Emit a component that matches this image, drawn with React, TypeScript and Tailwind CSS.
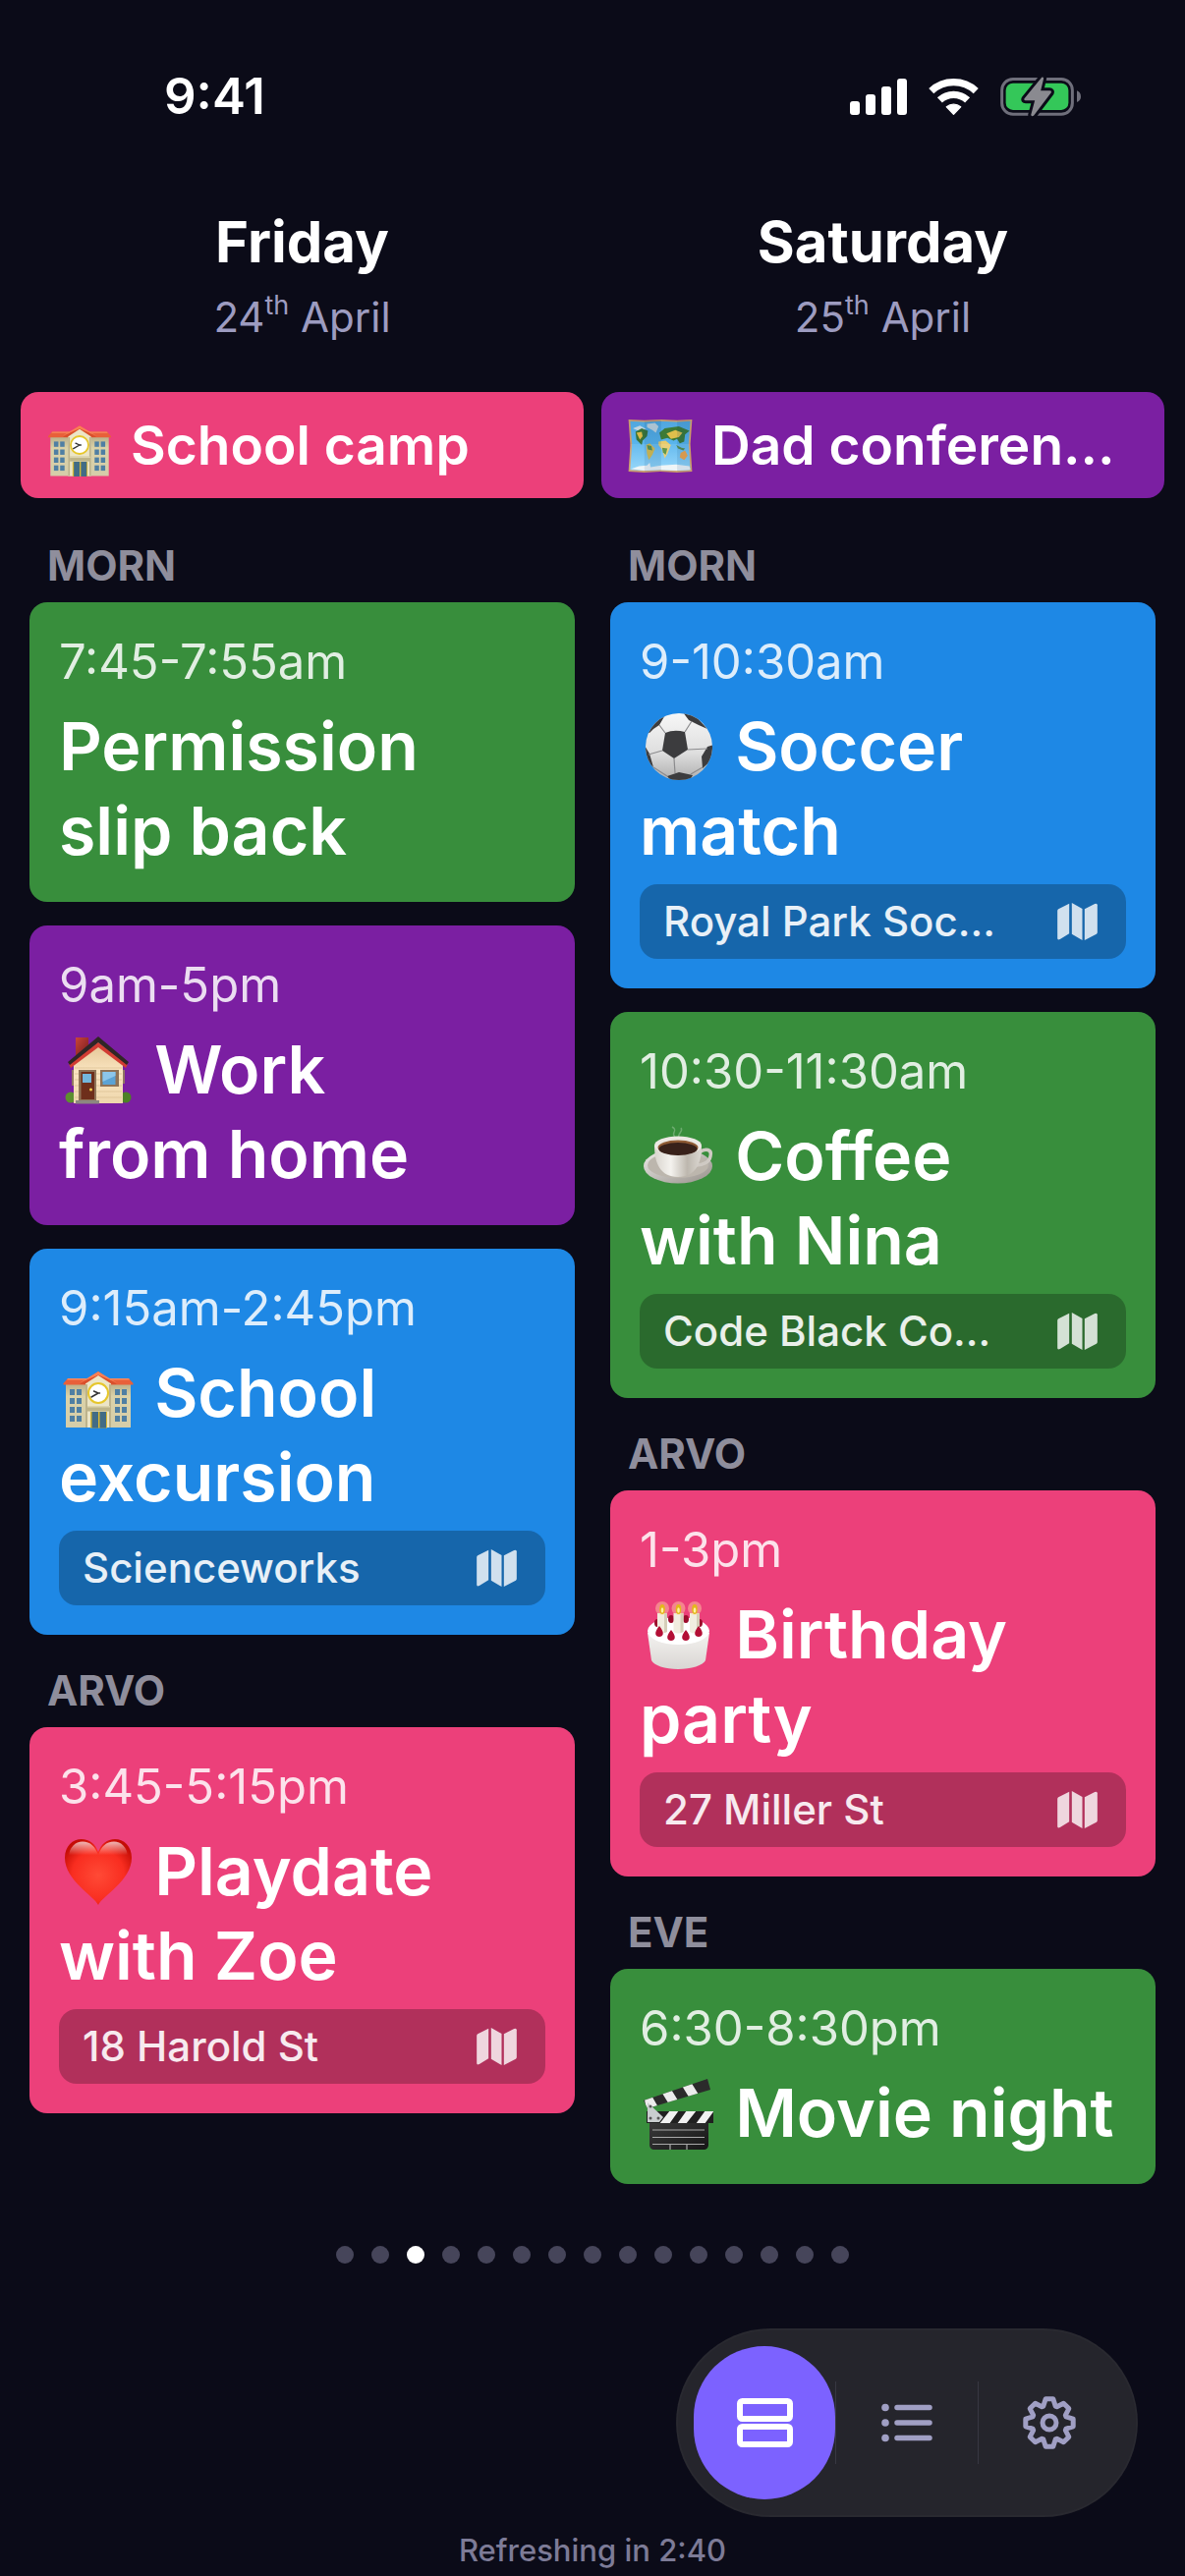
import type { ReactNode } from "react";
import clsx from "clsx";

type EmojiName = "school" | "map" | "house" | "heart" | "soccer" | "coffee" | "cake" | "clapper";
type Color = "green" | "purple" | "blue" | "pink";

type CalendarEvent = { time: string; title: string; color: Color; emoji?: EmojiName; location?: string };
type Section = { label: string; events: CalendarEvent[] };
type Day = {
  name: string;
  date: string;
  month: string;
  allDay: { title: string; color: Color; emoji: EmojiName };
  sections: Section[];
};

const COLORS: Record<Color, string> = {
  green: "bg-[#388e3c]",
  purple: "bg-[#7b1fa2]",
  blue: "bg-[#1e88e5]",
  pink: "bg-[#ec407a]",
};

const DAYS: Day[] = [
  {
    name: "Friday",
    date: "24",
    month: "April",
    allDay: { title: "School camp", color: "pink", emoji: "school" },
    sections: [
      {
        label: "MORN",
        events: [
          { time: "7:45-7:55am", title: "Permission\nslip back", color: "green" },
          { time: "9am-5pm", title: "Work\nfrom home", color: "purple", emoji: "house" },
          { time: "9:15am-2:45pm", title: "School\nexcursion", color: "blue", emoji: "school", location: "Scienceworks" },
        ],
      },
      {
        label: "ARVO",
        events: [
          { time: "3:45-5:15pm", title: "Playdate\nwith Zoe", color: "pink", emoji: "heart", location: "18 Harold St" },
        ],
      },
    ],
  },
  {
    name: "Saturday",
    date: "25",
    month: "April",
    allDay: { title: "Dad conferen…", color: "purple", emoji: "map" },
    sections: [
      {
        label: "MORN",
        events: [
          { time: "9-10:30am", title: "Soccer\nmatch", color: "blue", emoji: "soccer", location: "Royal Park Soc…" },
          { time: "10:30-11:30am", title: "Coffee\nwith Nina", color: "green", emoji: "coffee", location: "Code Black Co…" },
        ],
      },
      {
        label: "ARVO",
        events: [
          { time: "1-3pm", title: "Birthday\nparty", color: "pink", emoji: "cake", location: "27 Miller St" },
        ],
      },
      {
        label: "EVE",
        events: [{ time: "6:30-8:30pm", title: "Movie night", color: "green", emoji: "clapper" }],
      },
    ],
  },
];

const PAGE_COUNT = 15;
const CURRENT_PAGE = 2;

const WINDOW_ROWS = [36, 45, 54, 63];

const EMOJI: Record<EmojiName, ReactNode> = {
  school: (
    <>
      <defs>
        <linearGradient id="school-wall" x1="0" y1="0" x2="0" y2="1">
          <stop offset="0" stopColor="#b9ae88" />
          <stop offset="0.3" stopColor="#dbd2a8" />
          <stop offset="1" stopColor="#d5cda9" />
        </linearGradient>
      </defs>
      <path d="M7 30h66v45H7z" fill="url(#school-wall)" />
      <path d="M4.500 30 9 25h62l4.500 5v1.500h-71z" fill="#e8603a" />
      <path d="M9 25h62l1 1.500H8z" fill="#f98a5e" />
      <path d="M27 27 40 19l13 8v48H27z" fill="#ece5c6" />
      <path d="M27 31h2v44h-2zM51 31h2v44h-2z" fill="#bdb38c" />
      <path d="M40 18 21 31h5l14-9 14 9h5z" fill="#d9502c" />
      <path d="M40 18 21 29.500l19-8 19 8z" fill="#fb8054" />
      {WINDOW_ROWS.map((y) => (
        <g key={y} fill="#4f7fa3">
          <rect x="11" y={y} width="5" height="6" />
          <rect x="18" y={y} width="5" height="6" />
          <rect x="57" y={y} width="5" height="6" />
          <rect x="64" y={y} width="5" height="6" />
        </g>
      ))}
      <circle cx="40" cy="40" r="10" fill="#fff" stroke="#e6c62b" strokeWidth="2" />
      <path d="m40 40-7 4M40 40l-4.500-2M40 40h1.500" stroke="#333" strokeWidth="1.500" strokeLinecap="round" />
      <path d="M29 53h23v5.500H29z" fill="#bdb489" />
      <path d="M29 53h23v1.500H29z" fill="#dcd4ad" />
      <path d="M32 59h17v16.500H32z" fill="#d9b934" />
      <path d="M33.500 59h6.500v16.500h-6.500zM41.500 59H48v16.500h-6.500z" fill="#426c85" />
    </>
  ),
  map: (
    <>
      <defs>
        <linearGradient id="map-sea" x1="0" y1="0" x2="0" y2="1">
          <stop offset="0" stopColor="#51a6de" />
          <stop offset="0.5" stopColor="#5ab6ee" />
          <stop offset="1" stopColor="#8bd3fa" />
        </linearGradient>
      </defs>
      <path d="M4 11 22 12l19-1 18 1 17-1-2 28 2 31-17 1-19-1-18 1-18-1 2-30z" fill="#c99b6c" />
      <path d="M6 13 22 14l19-1 18 1 15-1-2 26 2 29-15 1-19-1-18 1-16-1 2-29z" fill="url(#map-sea)" />
      <path d="M25 16l9-1 4 4-3 7-4-3-6-3zM9 21l8-3 7 4-6 3z" fill="#c3d5df" />
      <path d="M12 25 19 21l7 3-1 6-5 5-1 5-6-6z" fill="#397339" />
      <path d="M13 26l6-1 1 5-3 4z" fill="#d9b846" />
      <path d="M24 40l4-2 6 6-3 7-4 6-2-7z" fill="#d7b63a" />
      <path d="M25 40l5 1 1 5-5-1z" fill="#44853a" />
      <path d="M39 26l6-5 16-2 12 5-5 4-1 8-5 2-3-5-4 2-7-3-7 2z" fill="#3d7a36" />
      <path d="M47 27l10-4 8 3-4 5-9 2z" fill="#dfbf4c" />
      <path d="M38 36l8-1 6 5-4 10-3 5-3-10-4-5z" fill="#e8cb6c" />
      <path d="M42 43l6 1-2 7-3-3z" fill="#528c37" />
      <path d="M63 49l5-3 3 6-4 5-5-3z" fill="#ef9a35" />
      <path d="M58 40l6 3 4 1-2 2-6-2z" fill="#447f38" />
      <path d="M7 67l9-3 9-1 3-3 1 5 12-2 17-1 15 2 1 4-15 1-19-1-18 1z" fill="#eef4f7" />
      <path d="M22 13l19-1v57l-19 1zM59 13l15-1-2 27 2 30-15 1z" fill="#003c70" opacity="0.120" />
      <path d="M6 39h67v30l-14 1-19-1-18 1-17-1z" fill="#fff" opacity="0.100" />
    </>
  ),
  house: (
    <>
      <defs>
        <linearGradient id="house-brick" x1="0" y1="0" x2="1" y2="1">
          <stop offset="0" stopColor="#c9453a" />
          <stop offset="1" stopColor="#7a1c1d" />
        </linearGradient>
        <linearGradient id="house-wall" x1="0" y1="0" x2="0" y2="1">
          <stop offset="0" stopColor="#e2c393" />
          <stop offset="0.5" stopColor="#fbe6c2" />
          <stop offset="1" stopColor="#eed6ac" />
        </linearGradient>
      </defs>
      <path d="M17 7h13v18H17z" fill="url(#house-brick)" />
      <circle cx="12" cy="68" r="5.500" fill="#5d8f2f" />
      <circle cx="68" cy="68" r="5.500" fill="#4c8025" />
      <path d="M13 40h3v16h-3zM65 40h2v14h-2z" fill="#927663" />
      <path d="M40 12 15 32v42h50V32z" fill="url(#house-wall)" />
      <path d="M16 38h48M16 44h48M16 50h48M16 56h48M16 62h48M16 68h48" stroke="#d8bd90" strokeWidth="0.700" />
      <path d="M10 34 40 12l30 22-2 4-28-21-28 21z" fill="#d23c33" />
      <path d="M9 32 40 6l31 26-2 3-29-23-29 23z" fill="#302626" />
      <path d="M20 40h18v31H20z" fill="#8f7357" />
      <path d="M22.500 42H36v28H22.500z" fill="#6e2e1b" />
      <path d="M24 44h9v9h-9z" fill="#74b6dc" />
      <circle cx="32.500" cy="60" r="1.500" fill="#f5cf4a" />
      <path d="M17 71h24v3.500H17z" fill="#8c8780" />
      <path d="M42 40h19v17H42z" fill="#8f7357" />
      <path d="M44.500 42h13v13h-13z" fill="#5ba3d5" />
      <path d="M44.500 42h13v4l-13 6z" fill="#8cc6ea" />
    </>
  ),
  heart: (
    <>
      <defs>
        <radialGradient id="heart-fill" cx="0.500" cy="0.550" r="0.600">
          <stop offset="0" stopColor="#ff4a36" />
          <stop offset="0.650" stopColor="#f92d20" />
          <stop offset="1" stopColor="#c40d06" />
        </radialGradient>
        <linearGradient id="heart-shine" x1="0" y1="0" x2="0" y2="1">
          <stop offset="0" stopColor="#fff" stopOpacity="0.700" />
          <stop offset="0.700" stopColor="#fff" stopOpacity="0" />
        </linearGradient>
      </defs>
      <path
        d="M40 74C36 65 6 49 6 26 6 14 14 7 23 7c8 0 14 5 17 13C43 12 49 7 57 7c9 0 17 7 17 19C74 49 44 65 40 74z"
        fill="url(#heart-fill)"
      />
      <path
        d="M10 26C10 15 17 9.500 24 9.500c8 0 13 5 16 14 3-9 8-14 16-14 7 0 14 5.500 14 16.500-9 4-51 4-60 0z"
        fill="url(#heart-shine)"
      />
    </>
  ),
  soccer: (
    <>
      <defs>
        <linearGradient id="ball-fill" x1="0" y1="0" x2="0" y2="1">
          <stop offset="0" stopColor="#f7f7f7" />
          <stop offset="0.600" stopColor="#dedede" />
          <stop offset="1" stopColor="#aeaeae" />
        </linearGradient>
        <clipPath id="ball-clip">
          <circle cx="40" cy="40" r="34" />
        </clipPath>
      </defs>
      <circle cx="40" cy="40" r="34" fill="url(#ball-fill)" />
      <g clipPath="url(#ball-clip)">
        <path d="M26 26q9-4 20-1l3 18-14 9-12-8z" fill="#3c3c3e" />
        <path d="M6 26l6-11 15-9-7 12-6 4-4 4zM44 5l12 3 13 14-9-4-10-5zM5 39l5 8 4 14-9-8zM76 38l-7 2-6 10 1 12 10-9zM28 70l12-4 14 3-4 7H33z" fill="#3c3c3e" />
        <path d="M26 26 20 18M46 25l7-11M49 43l20-1M35 52l1 15M23 44 9 48M52 68l12-7M28 70l-14-9" stroke="#8b8b8d" strokeWidth="1.200" fill="none" />
      </g>
    </>
  ),
  coffee: (
    <>
      <defs>
        <linearGradient id="cup-fill" x1="0" y1="0" x2="1" y2="0">
          <stop offset="0" stopColor="#d9d5ce" />
          <stop offset="0.350" stopColor="#f4f2ee" />
          <stop offset="0.700" stopColor="#bdb7ae" />
          <stop offset="1" stopColor="#dcd8d2" />
        </linearGradient>
        <linearGradient id="saucer-fill" x1="0" y1="0" x2="1" y2="1">
          <stop offset="0" stopColor="#efedea" />
          <stop offset="1" stopColor="#96908a" />
        </linearGradient>
      </defs>
      <path d="M36 20c-5-4 4-6-3-10m7 11c-2-5 5-6 2-10" stroke="#b9d4b9" strokeWidth="1.500" fill="none" opacity="0.400" />
      <ellipse cx="39" cy="50" rx="35" ry="17.500" fill="url(#saucer-fill)" />
      <ellipse cx="39" cy="49" rx="31" ry="13" fill="#bcb6ad" />
      <path d="M61 36c6-5 13-3 11 4-1 6-8 9-14 9" stroke="#cfcac4" strokeWidth="3.500" fill="none" />
      <path d="M15 29c0 18 6 32 24 32s24-14 24-32z" fill="url(#cup-fill)" />
      <ellipse cx="39" cy="29" rx="24" ry="9.500" fill="#ece9e4" />
      <ellipse cx="39" cy="31" rx="20.500" ry="7.500" fill="#8d5a34" />
      <ellipse cx="39" cy="32.500" rx="19.500" ry="6.500" fill="#38211a" />
    </>
  ),
  cake: (
    <>
      <defs>
        <linearGradient id="cake-side" x1="0" y1="0" x2="0" y2="1">
          <stop offset="0" stopColor="#f4f2f0" />
          <stop offset="1" stopColor="#d9d6d3" />
        </linearGradient>
      </defs>
      <path d="M8 38l4 28c2 5 14 9 27 9s26-4 28-9l4-28z" fill="url(#cake-side)" />
      <ellipse cx="39.500" cy="36" rx="31.500" ry="14" fill="#fff" />
      <g fill="#9c0d2d">
        <ellipse cx="18" cy="28" rx="3" ry="4" />
        <ellipse cx="32" cy="24" rx="3" ry="4" />
        <ellipse cx="47" cy="24" rx="3" ry="4" />
        <ellipse cx="61" cy="28" rx="3" ry="4" />
      </g>
      <path d="M18 18h10v19q-5 3-10 0zM34.500 18h10v19q-5 3-10 0zM51 18h10v19q-5 3-10 0z" fill="#f1eddf" />
      <path d="M25 18h3v19l-3 1zM41.500 18h3v19l-3 1zM58 18h3v19l-3 1z" fill="#d5cfb9" />
      {[23, 39.5, 56].map((x) => (
        <g key={x}>
          <circle cx={x} cy="13" r="7" fill="#ffd9a8" opacity="0.450" />
          <ellipse cx={x} cy="14" rx="2.800" ry="5" fill="#e3b81c" />
          <ellipse cx={x} cy="15" rx="1.300" ry="2.800" fill="#fff3a0" />
        </g>
      ))}
      <path
        d="M20 31c-6 7-4 11 0 11s6-4 0-11zM32 35c-6 7-4 11 0 11s6-4 0-11zM47 35c-6 7-4 11 0 11s6-4 0-11zM60 31c-6 7-4 11 0 11s6-4 0-11z"
        fill="#b30f35"
      />
    </>
  ),
  clapper: (
    <>
      <defs>
        <linearGradient id="slate-fill" x1="0" y1="0" x2="1" y2="1">
          <stop offset="0" stopColor="#3c3c3c" />
          <stop offset="1" stopColor="#161616" />
        </linearGradient>
        <clipPath id="slate-arm">
          <path d="M4 27 69 5l3 11L8 35z" />
        </clipPath>
        <clipPath id="slate-bar">
          <path d="M7 38h68v12H7z" />
        </clipPath>
      </defs>
      <path d="M10 46h60v26c0 3-2 5-5 5H15c-3 0-5-2-5-5z" fill="url(#slate-fill)" />
      <g clipPath="url(#slate-arm)">
        <path d="M0 0h80v40H0z" fill="#2b2b2b" />
        <path d="M4 20h7l8 14-12 4zM22 18l9-4 8 13-9 4zM43 12l9-4 8 13-9 4z" fill="#ececec" />
      </g>
      <g clipPath="url(#slate-bar)">
        <path d="M0 30h80v22H0z" fill="#202020" />
        <path d="M20 51l11-14h9L30 51zM38 51l10-14h10L47 51zM57 51l10-14h9L66 51z" fill="#f1f1f1" />
      </g>
      <path d="M8 29 24 44l-4 5H8z" fill="#c9cdcf" />
      <circle cx="11" cy="33" r="1.500" fill="#555" />
      <circle cx="11" cy="45" r="1.500" fill="#555" />
      <circle cx="19" cy="45" r="1.500" fill="#555" />
      <path d="M13 57h53M13 64.500h53M13 71.500h53M31 72v5M48 72v5" stroke="#a9a9a9" strokeWidth="1.200" />
    </>
  ),
};

function Emoji({ name, className }: { name: EmojiName; className: string }) {
  return (
    <svg viewBox="0 0 80 80" className={className} aria-hidden="true">
      {EMOJI[name]}
    </svg>
  );
}

function SignalIcon() {
  return (
    <svg viewBox="0 0 174 111" className="h-[37px] w-[58px]" fill="#fff" aria-hidden="true">
      <rect x="0" y="69" width="30" height="42" rx="9" />
      <rect x="48" y="48" width="30" height="63" rx="9" />
      <rect x="96" y="24" width="30" height="87" rx="9" />
      <rect x="144" y="0" width="30" height="111" rx="9" />
    </svg>
  );
}

function WifiIcon() {
  return (
    <svg viewBox="0 0 151 111" className="h-[37px] w-[51px]" fill="none" aria-hidden="true">
      <path d="M7.300 37.900A100 100 0 0 1 143.700 37.900" stroke="#fff" strokeWidth="22" />
      <path d="M33.200 65.700A62 62 0 0 1 117.800 65.700" stroke="#fff" strokeWidth="22" />
      <path d="M75.500 109 54 86.500A33 33 0 0 1 97 86.500Z" fill="#fff" stroke="#fff" strokeWidth="4" strokeLinejoin="round" />
    </svg>
  );
}

function BatteryIcon() {
  const bolt =
    "M127 2 74 67Q71 73 78 73H106L94 117Q97 124 103 119L156 49Q158 43 151 43H124L133 5Q131 -1 127 2Z";
  return (
    <svg viewBox="0 0 247 123" className="h-[41px] w-[82px]" aria-hidden="true">
      <rect x="5" y="7" width="216" height="108" rx="34" fill="none" stroke="#6f6f7b" strokeWidth="9" />
      <rect x="17" y="20" width="192" height="82" rx="22" fill="#34c759" />
      <path d="M235 43q12 5 12 18t-12 17z" fill="#6f6f7b" />
      <path d={bolt} fill="#8a8a90" stroke="#0b0b18" strokeWidth="18" strokeLinejoin="round" />
      <path d={bolt} fill="#8a8a90" />
    </svg>
  );
}

function MapIcon() {
  return (
    <svg viewBox="0 0 122 114" className="h-[38px] w-[41px] shrink-0 text-white/80" fill="currentColor" aria-hidden="true">
      <path d="M0 24q0-3 3-5L36 2v92L8 111q-8 4-8-3z" />
      <path d="M44 0 76 18v96L44 95z" />
      <path d="M83 19 114 3q8-3 8 4v83q0 3-3 5L83 114z" />
    </svg>
  );
}

function RowsIcon() {
  return (
    <svg viewBox="0 0 57 50" className="h-[50px] w-[57px]" fill="none" stroke="#fff" strokeWidth="6" aria-hidden="true">
      <rect x="3" y="3" width="51" height="18" rx="2.500" />
      <rect x="3" y="29" width="51" height="18" rx="2.500" />
    </svg>
  );
}

function ListIcon() {
  return (
    <svg viewBox="0 0 52 40" className="h-10 w-[52px]" aria-hidden="true">
      {[4.5, 20, 35.5].map((y) => (
        <g key={y}>
          <circle cx="4" cy={y} r="3.800" fill="#a09fc4" />
          <path d={`M16 ${y}h33`} stroke="#a09fc4" strokeWidth="5.500" strokeLinecap="round" />
        </g>
      ))}
    </svg>
  );
}

// Each tooth is two tip points between two root points.
const GEAR_POINTS = Array.from({ length: 8 }, (_, tooth) =>
  [[-20, 18], [-9, 24.5], [9, 24.5], [20, 18]].map(([offset, r]) => {
    const a = ((tooth * 45 + offset) * Math.PI) / 180;
    return `${28 + r * Math.sin(a)},${28 - r * Math.cos(a)}`;
  }),
)
  .flat()
  .join(" ");

function GearIcon() {
  return (
    <svg viewBox="0 0 56 56" className="size-14" fill="none" stroke="#a09fc4" strokeWidth="5" strokeLinejoin="round" aria-hidden="true">
      <polygon points={GEAR_POINTS} />
      <circle cx="28" cy="28" r="7" />
    </svg>
  );
}

function EventCard({ event }: { event: CalendarEvent }) {
  return (
    <article className={clsx("rounded-[18px] p-[30px]", COLORS[event.color])}>
      <p className="text-[49px] leading-[61px] text-white/85">{event.time}</p>
      <h3 className="mt-3 text-[68px] leading-[86px] font-semibold whitespace-pre">
        {event.emoji && (
          <>
            <Emoji name={event.emoji} className="mt-1 inline-block size-20 align-top" />{" "}
          </>
        )}
        {event.title}
      </h3>
      {event.location && (
        <button
          type="button"
          className="mt-3 flex w-full items-center justify-between rounded-[18px] bg-black/25 py-3 pr-[29px] pl-6 text-left"
        >
          <span className="truncate text-[42px] leading-[52px] font-medium text-white/90">{event.location}</span>
          <MapIcon />
        </button>
      )}
    </article>
  );
}

function DayColumn({ day }: { day: Day }) {
  return (
    <section className="min-w-0 flex-1">
      <header className="text-center">
        <h2 className="text-[58px] leading-[70px] font-bold">{day.name}</h2>
        <p className="mt-3 text-[42px] leading-[60px] text-[#9d9cc0]">
          {day.date}
          <sup className="static align-[18px] text-[27px] leading-none">th</sup> {day.month}
        </p>
      </header>

      <div className={clsx("mt-[46px] flex h-[108px] items-center rounded-[18px] px-6", COLORS[day.allDay.color])}>
        <Emoji name={day.allDay.emoji} className="size-18 shrink-0" />
        <p className="ml-4 text-[55px] leading-[68px] font-semibold whitespace-nowrap">{day.allDay.title}</p>
      </div>

      <div className="px-[9px] pt-3">
        {day.sections.map((section) => (
          <div key={section.label} className="pt-8">
            <h4 className="px-[18px] pb-3 text-[42px] leading-[50px] font-bold text-[#8f8e9c]">{section.label}</h4>
            <div className="flex flex-col gap-6">
              {section.events.map((event) => (
                <EventCard key={event.time} event={event} />
              ))}
            </div>
          </div>
        ))}
      </div>
    </section>
  );
}

export default function App() {
  return (
    <main className="flex min-h-screen flex-col bg-[#0b0b18] font-['Inter','Liberation_Sans',sans-serif] text-white">
      <div className="flex items-center justify-between pt-[67px] pr-[106px] pl-[167px]">
        <span className="text-[51px] leading-[62px] font-semibold">9:41</span>
        <div className="flex items-center gap-[22px]">
          <SignalIcon />
          <WifiIcon />
          <BatteryIcon />
        </div>
      </div>

      <div className="flex gap-[18px] px-[21px] pt-[82px]">
        {DAYS.map((day) => (
          <DayColumn key={day.name} day={day} />
        ))}
      </div>

      <div className="mt-[63px] flex justify-center gap-[18px]">
        {Array.from({ length: PAGE_COUNT }, (_, i) => (
          <button
            key={i}
            type="button"
            aria-label={`Page ${i + 1}`}
            className={clsx("size-[18px] rounded-full", i === CURRENT_PAGE ? "bg-white" : "bg-[#46455a]")}
          />
        ))}
      </div>

      <nav className="mt-[66px] mr-12 flex items-center self-end rounded-full bg-[#25252c] p-[18px] inset-ring-2 inset-ring-white/2">
        <button type="button" aria-label="Days" className="flex h-[156px] w-36 items-center justify-center rounded-full bg-[#7c62ff]">
          <RowsIcon />
        </button>
        <span className="h-[84px] w-px bg-[#383842]" />
        <button type="button" aria-label="List" className="flex h-[156px] w-36 items-center justify-center">
          <ListIcon />
        </button>
        <span className="h-[84px] w-px bg-[#383842]" />
        <button type="button" aria-label="Settings" className="flex h-[156px] w-36 items-center justify-center">
          <GearIcon />
        </button>
      </nav>

      <p className="mt-4 pb-2 text-center text-[31px] leading-9 font-medium text-[#7d7b97]">Refreshing in 2:40</p>
    </main>
  );
}
